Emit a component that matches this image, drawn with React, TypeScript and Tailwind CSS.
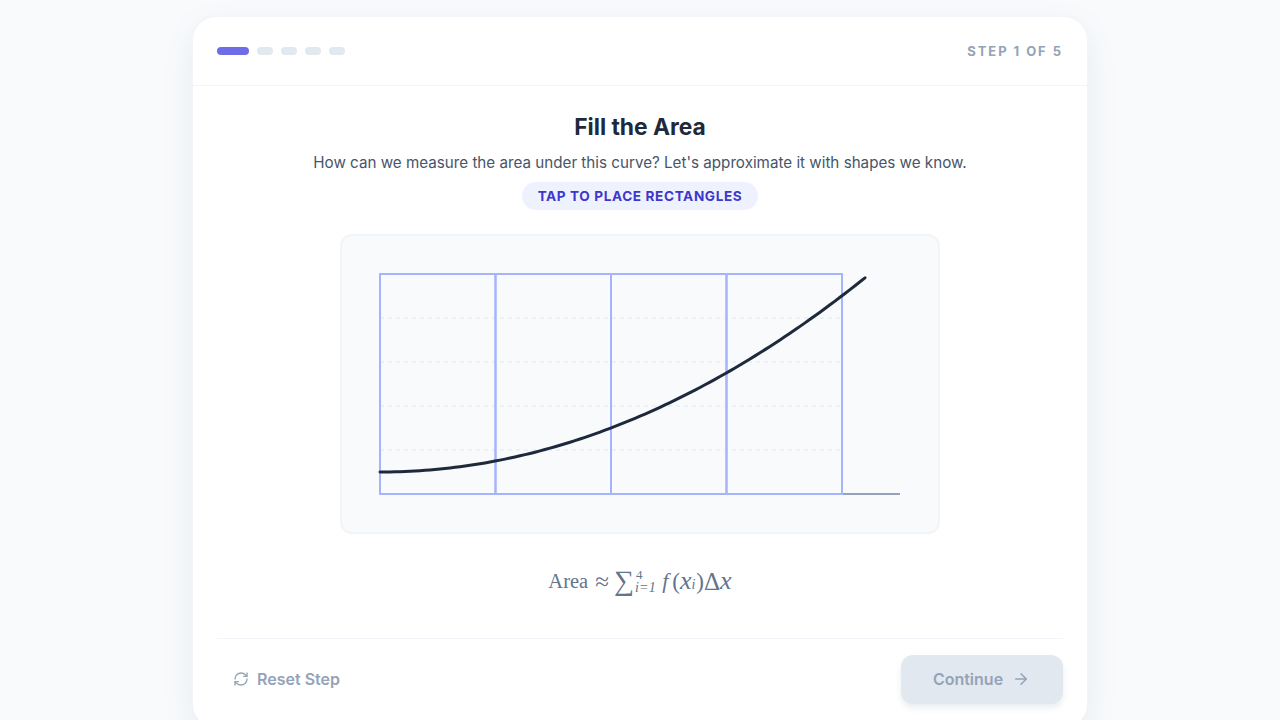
import { ArrowRight, RefreshCw } from "lucide-react";

const gridLines = [84, 128, 172, 216];
const rects = [40, 155.5, 271, 386.5];

// y = 238 - k(x-40)^2, sampled so the curve stays smooth
const curve = Array.from({ length: 98 }, (_, i) => {
  const x = 40 + i * 5;
  const y = 238 - (195 / (486 * 486)) * (x - 40) * (x - 40);
  return `${x},${y.toFixed(2)}`;
}).join(" ");

/* curve + placed rectangles */
function AreaChart() {
  return (
    <svg viewBox="0 0 600 300" className="-m-[2px] block h-[300px] w-[600px]">
      {gridLines.map((y) => (
        <line key={y} x1="40" y1={y} x2="502" y2={y} stroke="#e2e8f0" strokeWidth="1" strokeDasharray="4 4" />
      ))}
      <line x1="40" y1="260" x2="560" y2="260" stroke="#94a3b8" strokeWidth="2" />
      {rects.map((x) => (
        <rect key={x} x={x} y="40" width="115.5" height="220" fill="none" stroke="#a5b4fc" strokeWidth="2" />
      ))}
      <polyline points={curve} fill="none" stroke="#1e293b" strokeWidth="3" strokeLinecap="round" strokeLinejoin="round" />
    </svg>
  );
}

function Formula() {
  return (
    <div className="mt-[32px] mb-[1px] flex h-[30px] items-center justify-center leading-none text-[#64748b] [font-family:'Liberation_Serif',serif]">
      <span className="text-[20.5px]">Area</span>
      <span className="ml-[7px] text-[25px]">≈</span>
      <span className="ml-[5px] text-[28px] leading-[28px]">∑</span>
      <span className="mr-[5px] ml-px flex flex-col text-[14px] leading-[13px]">
        <span className="ml-[1px] text-[13px]">4</span>
        <span className="tracking-[0.3px] italic">i=1</span>
      </span>
      <span className="ml-[1px] text-[22px] italic">f</span>
      <span className="ml-[4px] text-[23px]">(</span>
      <span className="text-[26px] italic">x</span>
      <span className="mt-[8px] text-[14px] italic">i</span>
      <span className="ml-[1px] text-[23px]">)</span>
      <span className="text-[25px]">Δ</span>
      <span className="text-[26px] italic">x</span>
    </div>
  );
}

export default function App() {
  return (
    <div className="flex h-screen items-start justify-center overflow-hidden bg-[#f8fafc] pt-4 font-['Inter',sans-serif]">
      <div className="h-[712px] w-[896px] shrink-0 rounded-3xl border border-[#f1f5f9] bg-white shadow-[0_10px_30px_rgba(100,116,139,0.1)]">
        <div className="flex h-[69px] items-center justify-between border-b border-[#f1f5f9] px-6">
          <div className="flex gap-2">
            <div className="h-2 w-8 rounded-full bg-[#6f6ce8]" />
            <div className="h-2 w-4 rounded-full bg-[#e2e8f0]" />
            <div className="h-2 w-4 rounded-full bg-[#e2e8f0]" />
            <div className="h-2 w-4 rounded-full bg-[#e2e8f0]" />
            <div className="h-2 w-4 rounded-full bg-[#e2e8f0]" />
          </div>
          <span className="mt-[2px] text-[13px] font-bold tracking-[0.15em] text-[#94a3b8]">STEP 1 OF 5</span>
        </div>

        <div className="flex flex-col items-center px-6 pt-[25px]">
          <h1 className="text-[22.8px] leading-8 font-bold text-[#1e293b]">Fill the Area</h1>
          <p className="mt-[8px] text-[15.2px] leading-6 text-[#475569]">
            How can we measure the area under this curve? Let's approximate it with shapes we know.
          </p>
          <div className="mt-[7px] flex h-7 w-[236px] items-center justify-center rounded-full bg-[#eef2ff] text-[13.6px] font-bold tracking-[0.045em] text-[#3f37c9]">
            TAP TO PLACE RECTANGLES
          </div>
          <div className="mt-6 h-[300px] w-[600px] rounded-xl border-2 border-[#f1f5f9] bg-[#f8fafc]">
            <AreaChart />
          </div>
          <Formula />
        </div>

        <div className="mx-6 mt-[41px] flex h-[66px] items-start justify-between border-t border-[#f1f5f9] pt-4">
          <button className="flex h-[49px] items-center gap-2 px-4 pb-[2px] text-base font-semibold text-[#94a3b8]">
            <RefreshCw size={16} strokeWidth={2} />
            Reset Step
          </button>
          <button className="flex h-[49px] w-[162px] items-center justify-center gap-[9px] rounded-xl bg-[#e2e8f0] pr-px pb-[2px] text-base font-semibold text-[#94a3b8] shadow-[0_4px_6px_rgba(148,163,184,0.2)]">
            Continue
            <ArrowRight size={18} strokeWidth={2} />
          </button>
        </div>
      </div>
    </div>
  );
}
